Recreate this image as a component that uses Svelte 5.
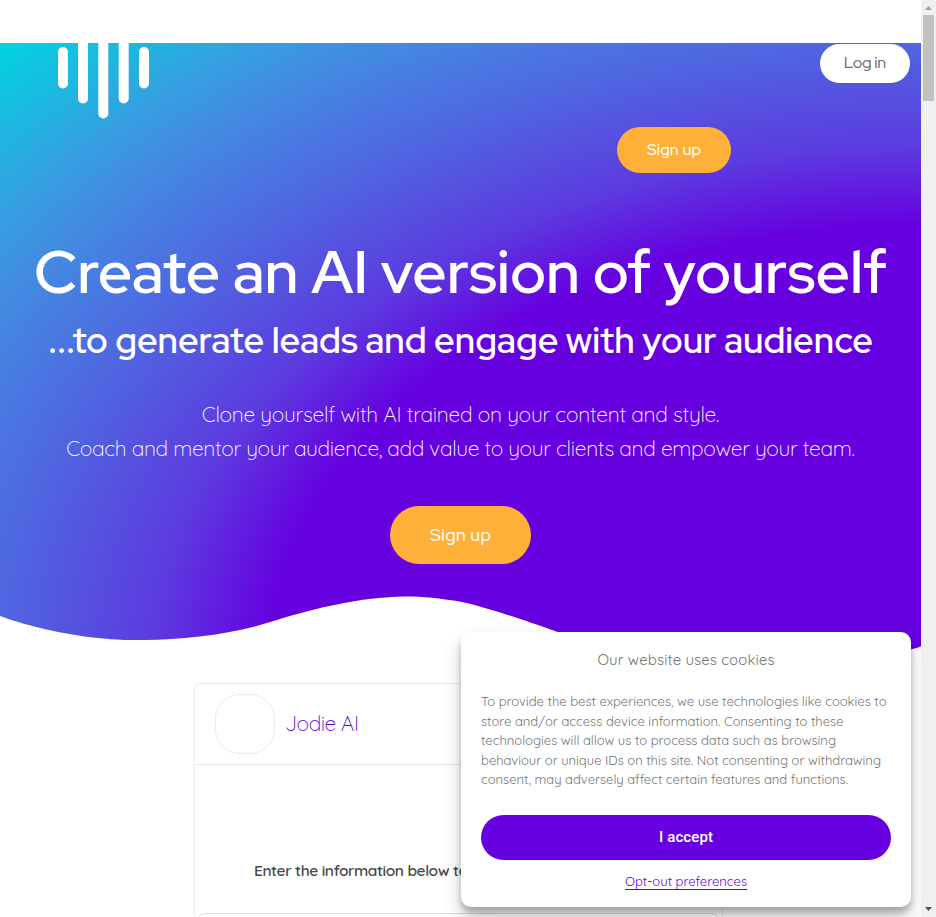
<script>
  const bars = [
    { x: 1, y: 4, h: 41.5 },
    { x: 21, y: -12, h: 72.5 },
    { x: 41.3, y: -27, h: 102.5 },
    { x: 61.7, y: -12, h: 72.5 },
    { x: 82, y: 4, h: 41.5 }
  ];

  const cookieLines = [
    { text: 'To provide the best experiences, we use technologies like cookies to', width: 405.5 },
    { text: 'store and/or access device information. Consenting to these', width: 362.5 },
    { text: 'technologies will allow us to process data such as browsing', width: 355 },
    { text: 'behaviour or unique IDs on this site. Not consenting or withdrawing', width: 400 },
    { text: 'consent, may adversely affect certain features and functions.', width: 367.5 }
  ];

  // Tracks a single line of text so that it spans the given width.
  function track(node, width) {
    const natural = node.getBoundingClientRect().width;
    const spacing = (width - natural) / (node.textContent.length - 1);
    node.style.letterSpacing = `${spacing}px`;
    node.style.marginRight = `${-spacing}px`;
  }
</script>

<div class="page">
  <main>
    <div class="strip"></div>

    <section class="hero">
      <header>
        <svg class="logo" width="93" height="77" viewBox="0 0 93 77" aria-label="Logo">
          {#each bars as bar}
            <rect x={bar.x} y={bar.y} width="10" height={bar.h} rx="5" fill="#fff" />
          {/each}
        </svg>
        <button class="login"><span class="line" use:track={42.5}>Log in</span></button>
      </header>
      <div class="nav">
        <button class="signup small"><span class="line" use:track={54}>Sign up</span></button>
      </div>

      <h1><span class="line" use:track={853}>Create an AI version of yourself</span></h1>
      <h2><span class="line" use:track={825}>...to generate leads and engage with your audience</span></h2>
      <div class="lead">
        <div><span class="line" use:track={517.5}>Clone yourself with AI trained on your content and style.</span></div>
        <div><span class="line" use:track={788.5}>Coach and mentor your audience, add value to your clients and empower your team.</span></div>
      </div>
      <button class="signup"><span class="line" use:track={61}>Sign up</span></button>

      <svg class="wave" viewBox="0 0 1000 100" preserveAspectRatio="none">
        <path
          fill="#fff"
          d="M421.9,6.5c22.6-2.5,51.5,0.4,75.5,5.3c23.6,4.9,70.9,23.5,100.5,35.7c75.8,32.2,133.7,44.5,192.6,49.7c23.6,2.1,48.7,3.5,103.4-2.5c54.7-6,106.2-25.6,106.2-25.6V101H0V30.3c0,0,72,32.6,158.4,30.5c39.2-0.7,92.8-6.7,134-22.4c21.2-8.1,52.2-18.2,79.7-24.2C399.3,7.9,411.6,7.5,421.9,6.5z"
        />
      </svg>
    </section>

    <section class="chat">
      <div class="chat-head">
        <div class="avatar"></div>
        <span class="name"><span class="line" use:track={74}>Jodie AI</span></span>
      </div>
      <div class="chat-body">
        <p><span class="line" use:track={214}>Enter the information below to</span></p>
        <div class="field"></div>
      </div>
    </section>

    <aside class="cookies">
      <div class="title"><span class="line" use:track={177}>Our website uses cookies</span></div>
      <div class="message">
        {#each cookieLines as line}
          <div><span class="line" use:track={line.width}>{line.text}</span></div>
        {/each}
      </div>
      <button class="accept"><span class="line" use:track={54}>I accept</span></button>
      <div class="optout"><a href="#preferences"><span class="line" use:track={122}>Opt-out preferences</span></a></div>
    </aside>
  </main>

  <div class="scrollbar">
    <svg width="15" height="15" viewBox="0 0 15 15"><path d="M4 10L7.5 6L11 10z" fill="#a3a3a3" /></svg>
    <div class="thumb"></div>
    <svg class="down" width="15" height="15" viewBox="0 0 15 15"><path d="M4 5L7.5 9L11 5z" fill="#505050" /></svg>
  </div>
</div>

<style>
  :global(body) {
    margin: 0;
    overflow: hidden;
  }
  .page {
    display: flex;
    width: 936px;
    height: 917px;
    overflow: hidden;
    background: #fff;
    font-family: Quicksand, Lato, sans-serif;
  }
  main {
    position: relative;
    width: 921px;
    height: 917px;
    overflow: hidden;
  }
  button {
    display: flex;
    align-items: center;
    justify-content: center;
    border: 0;
    padding: 0;
    font-family: 'Red Hat Display', Lato, sans-serif;
  }
  .line {
    display: inline-block;
    white-space: nowrap;
  }
  .strip {
    height: 43px;
  }
  .hero {
    position: relative;
    height: 627px;
    display: flex;
    flex-direction: column;
    align-items: center;
    color: #fff;
    background: radial-gradient(
      at bottom right,
      #6600df 50%,
      #5c3bdf 59%,
      #4f67e0 71%,
      #428ce0 82%,
      #369fe1 87%,
      #00d4e0 100%
    );
  }
  header {
    align-self: stretch;
    display: flex;
    justify-content: space-between;
    height: 77px;
    padding: 0 11px 0 57px;
  }
  .logo {
    display: block;
  }
  .login {
    box-sizing: border-box;
    width: 90px;
    height: 39px;
    margin-top: 1px;
    padding-bottom: 3px;
    border-radius: 20px;
    background: #fff;
    color: #737373;
    font-size: 16px;
    font-weight: 500;
  }
  .nav {
    align-self: stretch;
    display: flex;
    justify-content: flex-end;
    padding: 7px 190px 0 0;
  }
  .signup {
    box-sizing: border-box;
    width: 141px;
    height: 58px;
    border-radius: 29px;
    background: #ffb038;
    color: #fff;
    font-size: 17.5px;
    font-weight: 500;
    padding-bottom: 1px;
  }
  .signup.small {
    width: 114px;
    height: 46px;
    border-radius: 23px;
    font-size: 16px;
    padding-bottom: 2px;
  }
  h1,
  h2,
  p {
    margin: 0;
  }
  h1 {
    margin-top: 63px;
    font: 600 60px/72px 'Red Hat Display', Lato, sans-serif;
  }
  h2 {
    margin-top: 10px;
    font: 600 36px/44px 'Red Hat Display', Lato, sans-serif;
  }
  .lead {
    margin-top: 35px;
    margin-bottom: 41px;
    text-align: center;
    font-size: 21px;
    line-height: 34px;
    font-weight: 350;
  }
  .wave {
    position: absolute;
    left: 0;
    bottom: -1px;
    width: 921px;
    height: 79px;
  }
  .chat {
    box-sizing: border-box;
    width: 529px;
    height: 300px;
    margin: 13px 0 0 194px;
    border: 1px solid #e9eded;
    border-radius: 6px;
  }
  .chat-head {
    display: flex;
    align-items: center;
    height: 80px;
    padding-left: 20px;
    border-bottom: 1px solid #e2e8e8;
  }
  .avatar {
    box-sizing: border-box;
    width: 60px;
    height: 60px;
    border: 1px solid #e8ecec;
    border-radius: 25px;
  }
  .name {
    margin-left: 10px;
    padding-bottom: 2px;
    color: #5c08c8;
    font-size: 21px;
    font-weight: 350;
  }
  .chat-body {
    display: flex;
    flex-direction: column;
    padding: 93px 2px 0;
  }
  .chat-body p {
    padding-left: 57px;
    color: #484848;
    font-size: 15.5px;
    line-height: 24px;
    font-weight: 650;
  }
  .field {
    height: 50px;
    margin-top: 31px;
    border: 1px solid #d8dcdc;
    border-radius: 8px;
  }
  .cookies {
    position: absolute;
    right: 10px;
    bottom: 10px;
    box-sizing: border-box;
    width: 450px;
    height: 275px;
    padding: 16px 20px 0;
    border-radius: 10px;
    background: #fff;
    box-shadow:
      rgba(0, 0, 0, 0.19) 0 10px 20px,
      rgba(0, 0, 0, 0.23) 0 6px 6px;
  }
  .title {
    height: 24px;
    text-align: center;
    color: #737373;
    font-size: 15px;
    line-height: 24px;
  }
  .message {
    margin-top: 20px;
    color: #737373;
    font-size: 13px;
    line-height: 19.5px;
    font-weight: 400;
  }
  .message div {
    height: 19.5px;
  }
  .accept {
    box-sizing: border-box;
    width: 410px;
    height: 45px;
    margin-top: 25.5px;
    padding-bottom: 2px;
    border-radius: 23px;
    background: #6600df;
    color: #fff;
    font: 500 15px Roboto, sans-serif;
  }
  .optout {
    display: flex;
    justify-content: center;
    margin-top: 13px;
    font-size: 13px;
    line-height: 16px;
  }
  .optout a {
    border-bottom: 1px solid #6600df;
    color: #6600df;
    text-decoration: none;
  }
  .scrollbar {
    display: flex;
    flex-direction: column;
    width: 15px;
    background: #f0f0f0;
  }
  .thumb {
    width: 11px;
    height: 86px;
    margin-left: 2px;
    background: #c1c1c1;
  }
  .down {
    margin-top: auto;
  }
</style>
